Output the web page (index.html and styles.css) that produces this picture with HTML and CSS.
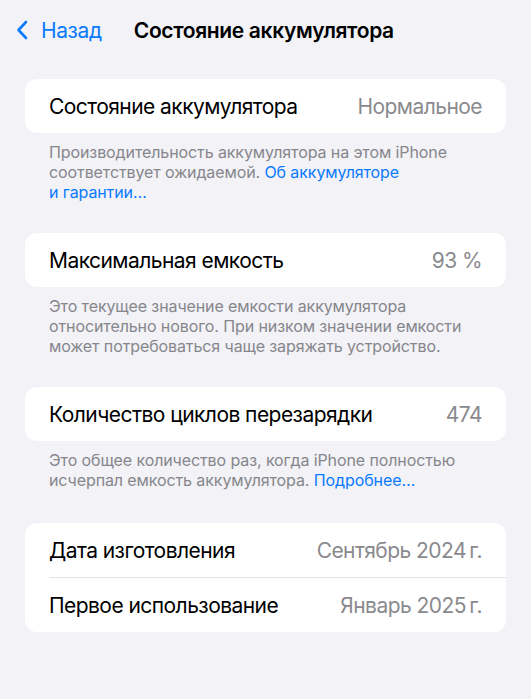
FILE: index.html
```html
<!DOCTYPE html>
<html lang="ru">
<head>
<meta charset="utf-8">
<title>Состояние аккумулятора</title>
<link rel="stylesheet" href="styles.css">
</head>
<body>
<div class="screen">
  <header class="nav">
    <a class="back" href="#">
      <svg class="chevron" viewBox="0 0 12 20" width="12" height="20" aria-hidden="true">
        <path d="M10 2 L2.5 10 L10 18" fill="none" stroke="currentColor" stroke-width="2.6" stroke-linecap="round" stroke-linejoin="round"/>
      </svg>
      <span>Назад</span>
    </a>
    <h1 class="nav-title">Состояние аккумулятора</h1>
  </header>

  <section class="group">
    <div class="card">
      <div class="row">
        <span class="label">Состояние аккумулятора</span>
        <span class="value">Нормальное</span>
      </div>
    </div>
    <p class="note">Производительность аккумулятора на этом iPhone соответствует ожидаемой. <a href="#">Об аккумуляторе и&nbsp;гарантии…</a></p>
  </section>

  <section class="group">
    <div class="card">
      <div class="row">
        <span class="label">Максимальная емкость</span>
        <span class="value">93 %</span>
      </div>
    </div>
    <p class="note">Это текущее значение емкости аккумулятора относительно нового. При низком значении емкости может потребоваться чаще заряжать устройство.</p>
  </section>

  <section class="group">
    <div class="card">
      <div class="row">
        <span class="label">Количество циклов перезарядки</span>
        <span class="value">474</span>
      </div>
    </div>
    <p class="note">Это общее количество раз, когда iPhone полностью исчерпал емкость аккумулятора. <a href="#">Подробнее…</a></p>
  </section>

  <section class="group group-last">
    <div class="card">
      <div class="row">
        <span class="label">Дата изготовления</span>
        <span class="value">Сентябрь 2024&#8201;г.</span>
      </div>
      <div class="row">
        <span class="label">Первое использование</span>
        <span class="value">Январь 2025&#8201;г.</span>
      </div>
    </div>
  </section>
</div>
</body>
</html>
```

FILE: styles.css
```css
* {
  box-sizing: border-box;
}

html, body {
  margin: 0;
  padding: 0;
  background: #f2f2f7;
}

body {
  font-family: Inter, "Noto Sans", "Liberation Sans", sans-serif;
  color: #000;
  -webkit-font-smoothing: antialiased;
}

.screen {
  width: 531px;
  min-height: 699px;
  display: flex;
  flex-direction: column;
}

/* Navigation bar */
.nav {
  height: 60px;
  display: flex;
  align-items: center;
  padding: 0 0 0 16px;
}

.back {
  display: flex;
  align-items: center;
  gap: 13px;
  color: #0a7aff;
  text-decoration: none;
  font-size: 21px;
  letter-spacing: -0.4px;
}

.chevron {
  width: 12px;
  height: 20px;
}

.nav-title {
  margin: 0 0 0 32px;
  font-size: 21px;
  font-weight: 600;
  letter-spacing: -0.35px;
}

/* Grouped list */
.group {
  padding: 19px 25px 12px;
}

.group-last {
  padding-top: 21px;
}

.card {
  background: #fff;
  border-radius: 12px;
  overflow: hidden;
}

.row {
  height: 54px;
  margin-left: 24px;
  padding-right: 24px;
  display: flex;
  align-items: center;
  justify-content: space-between;
  font-size: 21px;
  letter-spacing: -0.55px;
}

.row + .row {
  height: 55px;
  border-top: 1px solid #e3e3e8;
}

.value {
  color: #8a8a8e;
}

.note {
  margin: 9px 24px 0;
  font-size: 16px;
  line-height: 20px;
  color: #86868b;
  letter-spacing: -0.1px;
}

.note a {
  color: #0a7aff;
  text-decoration: none;
}
```
